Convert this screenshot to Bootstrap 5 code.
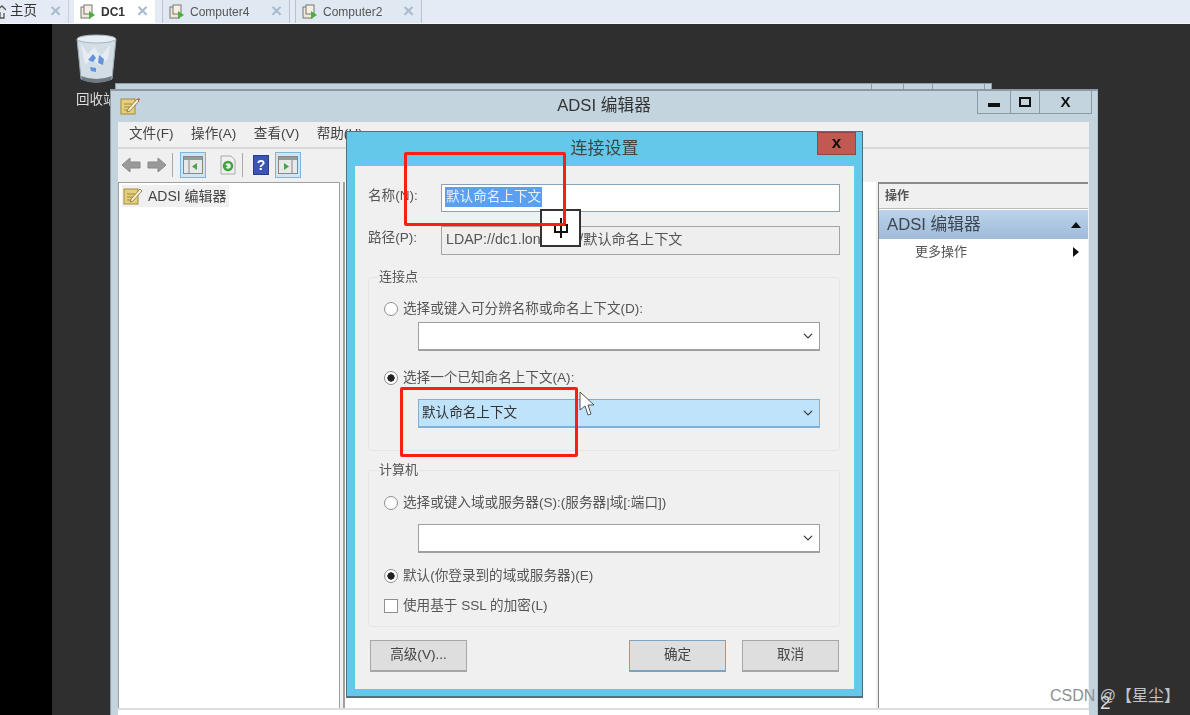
<!DOCTYPE html>
<html lang="zh"><head><meta charset="utf-8"><title>ADSI 编辑器</title>
<link href="https://cdn.jsdelivr.net/npm/bootstrap@5.3.0/dist/css/bootstrap.min.css" rel="stylesheet">
<style>
html,body{height:715px;overflow:hidden;margin:0;background:#000}
body,.form-control,.form-select,.btn{font-family:"Liberation Sans","Noto Sans CJK SC",sans-serif;font-size:13.6px;color:#444}
.stage{width:1190px;height:715px;position:relative;overflow:hidden;filter:blur(.55px)}
.tabbar{height:24px;background:#e4ebf4;border-bottom:1px solid #f4f6f9}
.vmtab{height:23px;display:flex;align-items:center;gap:5px;color:#555;font-size:12px;padding-left:6px;position:relative}
.vmtab.tab-home{width:69px;padding-left:0;gap:4px;font-size:13.5px;color:#333;border-right:1px solid #c6d0dc;margin-right:5px}
.vmtab.tab-on{width:81px;background:#fff;font-weight:700;color:#333;margin-right:7px}
.vmtab.tab-c4{width:128px;background:#e0e8f2;margin-right:5px;border-left:1px solid #b8c3cf;border-right:1px solid #b8c3cf}
.vmtab.tab-c2{width:127px;background:#e0e8f2;border-left:1px solid #b8c3cf;border-right:1px solid #b8c3cf}
.tabx{position:absolute;right:7px;top:2px;font-size:19px;color:#a9bbd0;font-weight:700;line-height:17px}
.desk{position:absolute;left:52px;top:24px;right:0;bottom:0;background:#2f2f2f}
.binicon{position:absolute;left:76px;top:34px}
.binlabel{position:absolute;left:76px;top:90px;color:#ddd;font-size:13.5px}
.ghost{position:absolute;left:115px;top:83px;width:877px;height:12px;background:#c3d4df;border:1px solid #8f9ea6;display:flex;justify-content:flex-end}
.ghost span{border-left:1px solid #8f9ea6}
.ghost .g1{width:32px}.ghost .g2{width:29px}.ghost .g3{width:52px}.ghost .g4{width:7px}
.appwin{position:absolute;left:110px;top:89px;width:988px;height:640px;background:#c3d4df;border-top:2px solid #8b9aa2;border-left:1px solid #8b9aa2;border-right:1px solid #aebfca}
.apptitle{height:31px;position:relative;text-align:center;font-size:16.7px;line-height:30px;color:#333}
.appicon{position:absolute;left:9px;top:6px}
.winctl{position:absolute;right:5px;top:-1px;height:24px;width:115px;border:1px solid #8b9aa2;border-top:0}
.winctl span{display:flex;align-items:center;justify-content:center;border-right:1px solid #8b9aa2;font-weight:700;color:#111}
.winctl span:nth-child(1){width:33px}.winctl span:nth-child(2){width:29px}.winctl span:nth-child(3){flex:1;border:0;font-size:15px}
.ctl-min{width:12px;height:4px;background:#111;margin-top:7px}
.ctl-max{width:12px;height:10px;border:2px solid #111}
.appbody{margin:0 8px 0 7px;background:#f0f0f0;height:590px}
.menuline{height:27px;border-bottom:2px solid #d9d9d9;padding-left:11px;gap:17.5px;align-items:center;color:#444}
.toolline{height:33px;padding:0 0 1px 1px;align-items:center;gap:1px}
.tbtn{width:26px;height:26px;display:flex;align-items:center;justify-content:center}
.tbtn.tb-arrow{width:24.5px}
.tbtn.tb-view{margin-left:4px}
.tbtn.tb-refresh{width:22px;margin-left:10px}
.tbtn.tb-help{margin-left:2px}
.tbtn.on{background:#cde6f7;border:1px solid #7db5db}
.tsep{width:1px;height:24px;background:#a9a9a9;margin:0 2px}
.panes{height:526px}
.pane-left{width:222px;background:#fff;border:1px solid #a0a0a0;border-bottom:0;padding:2px 3px}
.treeitem{display:inline-flex;align-items:center;gap:5px;background:#f0f0f0;height:22px;padding:0 2px 0 1px;color:#444;font-size:14px}
.pane-mid{width:533px;margin:0 2px 0 3px;background:#fff;border-left:2px solid #a0a0a0}
.pane-right{width:210px;background:#fff;border-left:1px solid #808080;border-top:2px solid #8a8a8a}
.act-h{height:25px;background:#f0f0f0;border-bottom:1px solid #bbb;padding:0 6px;font-size:12px;font-weight:700;color:#555;line-height:25px}
.act-b{height:29px;background:linear-gradient(#bcd3ea,#9fbbd9);display:flex;align-items:center;justify-content:space-between;padding:0 7px 0 8px;font-size:16.7px;color:#3c4650;margin-top:1px}
.act-i{height:25px;display:flex;align-items:center;justify-content:space-between;padding:0 9px 0 36px;font-size:13px;color:#555}
.tri-up{width:0;height:0;border-style:solid;border-color:transparent transparent #111;border-width:0 5.5px 6px}
.tri-right{border:5px solid transparent;border-right:0;border-left:6px solid #111;width:0;height:0}
.appfoot{height:8px;border-top:2px solid #ddd;background:#fff}
.dlg{position:absolute;left:346px;top:131px;width:517px;height:567px;background:#63c8ea;border:1px solid #55707c;border-right-color:#4d6a77;border-bottom-width:2px}
.dlg-title{height:34px;text-align:center;font-size:17px;line-height:33px;color:#444;position:relative}
.dlg-x{position:absolute;right:6px;top:0;width:39px;height:23px;background:#c0594f;border:1px solid #8c4a44;color:#111;font-weight:700;font-size:17px;line-height:19px}
.dlg-in{margin:0 8px;background:#f0f0f0;height:523px;padding:18px 14px 0 13px}
.f-row{display:flex;align-items:center;height:28px;margin-bottom:14px}
.f-row label{width:73px;color:#555;padding-bottom:3px}
.dlgfield{flex:1;height:28px;border-radius:0;padding:0 2px 3px 3px;background:#fff;border:1px solid #8aa3bb;color:#555;box-shadow:none;display:flex;align-items:center;line-height:18px}
.dlgfield.ro{background:#eee;border:1px solid #a5a5a5;padding:0 0 2px 4px;height:29px;font-size:14.2px}
.sel-text{background:#5b9ff0;color:#e7f0fb;padding:0 1px;line-height:20px}
.gp{border:1px solid #e3e6e8;border-radius:3px;position:relative}
.gp-a{height:174px;margin-top:23px;padding-top:21px}
.gp-b{height:157px;margin-top:19px;padding-top:22px}
.gp-lg{position:absolute;left:10px;top:-9px;background:#f0f0f0;color:#555;line-height:16px;font-size:13px}
.opt{display:flex;align-items:center;gap:5px;height:20px;padding-left:15px;margin:0;color:#555;min-height:0}
.opt .form-check-input{margin:0;width:14px;height:14px;float:none;border-color:#8f8f8f;background-color:#fff;flex:none}
.opt .form-check-input:checked{background-color:#fff;border-color:#8f8f8f;background-image:radial-gradient(circle,#222 0 3.4px,transparent 3.9px)}
.dlgsel{display:block;margin-left:49px;width:402px;height:29px;border-radius:0;padding:0 24px 0 3px;background-color:#fff;border:1px solid #a0a0a0;border-bottom-width:2px;color:#333;font-size:13.6px;box-shadow:none;background-position:right 5px center;background-size:12px 10px}
.dlgsel.hot{background-color:#bfe3fb;border-color:#7fb1d8}
.s1{margin-top:3px}.s2{margin-top:11px}.o2{margin-top:17px}.o3{margin-top:13px}.o4{margin-top:10px}.s3{margin-top:11px}
.btnline{display:flex;justify-content:space-between;margin-top:13px;padding:0 1px 0 2px}
.dbtn{width:97px;height:32px;border-radius:0;background:#dedede;border:1px solid #a7a7a7;border-bottom-width:2px;color:#444;padding:0;font-size:13.6px}
.dbtn.pri{border-color:#7ba3c6;margin-right:16px}
.redbox{position:absolute;border:3px solid #fb1f12;border-radius:2px;pointer-events:none}
.rb1{left:404px;top:152px;width:162px;height:74px}
.rb2{left:400px;top:387px;width:178px;height:70px}
.cursorbox{position:absolute;left:540px;top:209px;width:41px;height:38px;background:#fff;border:2px solid #333;display:flex;align-items:center;justify-content:center}
.ptr{position:absolute;left:578px;top:391px}
.wmark{position:absolute;left:1050px;top:686px;color:#c4c4c4;font-size:16px;white-space:nowrap;line-height:20px}
.wmark i{font-style:normal;color:#8f8f8f}
.num2{position:absolute;left:1100px;top:693px;color:#ddd;font-size:19px;line-height:20px}
</style></head><body>
<div class="stage">
 <nav class="tabbar d-flex">
  <div class="vmtab tab-home"><svg width="6" height="14" viewBox="0 0 6 14"><path d="M-5 7l7-6 4 4M0 7v6h4V8" fill="none" stroke="#555" stroke-width="1.300"/></svg>主页<span class="tabx">×</span></div>
  <div class="vmtab tab-on"><svg width="16" height="16" viewBox="0 0 16 16"><rect x="1" y="3" width="9" height="11" fill="#efe9d9" stroke="#777"/><rect x="4" y="1" width="8" height="9" fill="#f5f0e2" stroke="#777"/><path d="M9 7l6 4-6 4z" fill="#4cae3c"/></svg>DC1<span class="tabx">×</span></div>
  <div class="vmtab tab-c4"><svg width="16" height="16" viewBox="0 0 16 16"><rect x="1" y="3" width="9" height="11" fill="#efe9d9" stroke="#777"/><rect x="4" y="1" width="8" height="9" fill="#f5f0e2" stroke="#777"/><path d="M9 7l6 4-6 4z" fill="#4cae3c"/></svg>Computer4<span class="tabx">×</span></div>
  <div class="vmtab tab-c2"><svg width="16" height="16" viewBox="0 0 16 16"><rect x="1" y="3" width="9" height="11" fill="#efe9d9" stroke="#777"/><rect x="4" y="1" width="8" height="9" fill="#f5f0e2" stroke="#777"/><path d="M9 7l6 4-6 4z" fill="#4cae3c"/></svg>Computer2<span class="tabx">×</span></div>
 </nav>
 <div class="desk"></div>
 <svg class="binicon" width="41" height="50" viewBox="0 0 41 50"><path d="M1 5h39l-4 40q-15 6-31 0z" fill="#d3dde6" stroke="#9aa5ae"/><ellipse cx="20.500" cy="5" rx="19.500" ry="4" fill="#e6edf3" stroke="#aab4bc"/><path d="M5 10l7 10 6-7 7 9 9-11-2 14-9 6-7-6-7 6z" fill="#eef3f7" opacity=".7"/><path d="M12 26l5-6 3 4-3 4zM23 21l5 4-1 6-5-2zM14 33l6 1v4l-5-1z" fill="#4e86d8" opacity=".85"/><path d="M5 42q15 6 31 0l-1 4q-15 6-29 0z" fill="#6f7a82"/></svg>
 <div class="binlabel">回收站</div>
 <div class="ghost"><span class="g1"></span><span class="g2"></span><span class="g3"></span><span class="g4"></span></div>
 <section class="appwin">
  <div class="apptitle">ADSI 编辑器
   <svg class="appicon" width="20" height="18" viewBox="0 0 20 18"><rect x="1" y="2" width="14" height="15" fill="#e6cf7c" stroke="#a08a3f"/><path d="M4 7h8M4 10h7M4 13h5" stroke="#a08a3f"/><path d="M8 12L17 2l2 2-9 10-3 1z" fill="#f6efcf" stroke="#85703a" stroke-width=".8"/><path d="M17 2l2 2 1-2-1-1z" fill="#d05a4a"/></svg>
   <div class="winctl d-flex"><span><i class="ctl-min"></i></span><span><i class="ctl-max"></i></span><span>X</span></div>
  </div>
  <div class="appbody">
   <div class="menuline d-flex"><span>文件(F)</span><span>操作(A)</span><span>查看(V)</span><span>帮助(H)</span></div>
   <div class="toolline d-flex">
    <div class="tbtn tb-arrow"><svg width="20" height="16" viewBox="0 0 20 16"><path d="M1 8l8-7v4h10v6H9v4z" fill="#9a9a9a" stroke="#888"/></svg></div>
    <div class="tbtn tb-arrow"><svg width="20" height="16" viewBox="0 0 20 16"><path d="M19 8l-8-7v4H1v6h10v4z" fill="#9a9a9a" stroke="#888"/></svg></div>
    <div class="tsep"></div>
    <div class="tbtn on tb-view"><svg width="20" height="18" viewBox="0 0 20 18"><rect x=".5" y=".5" width="19" height="17" fill="#e8e8e8" stroke="#888"/><rect x="1" y="1" width="18" height="3" fill="#999"/><path d="M6 4v14" stroke="#888"/><path d="M14 7v7l-5-3.500z" fill="#47a447"/></svg></div>
    <div class="tbtn tb-refresh"><svg width="16" height="20" viewBox="0 0 16 20"><path d="M1 1h10l4 4v14H1z" fill="#f0f0f0" stroke="#aaa"/><circle cx="8" cy="11" r="4" fill="none" stroke="#3fa33f" stroke-width="2.500"/><path d="M3 9l2 4 3-2z" fill="#3fa33f"/></svg></div>
    <div class="tsep"></div>
    <div class="tbtn tb-help"><svg width="16" height="20" viewBox="0 0 16 20"><rect x=".5" y=".5" width="15" height="19" fill="#3a55b5" stroke="#2a3d86"/><text x="8" y="15" text-anchor="middle" fill="#fff" font-size="14" font-weight="700" font-family="Liberation Sans">?</text></svg></div>
    <div class="tbtn on"><svg width="20" height="18" viewBox="0 0 20 18"><rect x=".5" y=".5" width="19" height="17" fill="#e8e8e8" stroke="#888"/><rect x="1" y="1" width="18" height="3" fill="#999"/><path d="M14 4v14" stroke="#888"/><path d="M6 7v7l5-3.500z" fill="#47a447"/></svg></div>
   </div>
   <div class="panes d-flex">
    <div class="pane-left"><span class="treeitem"><svg width="20" height="18" viewBox="0 0 20 18"><rect x="1" y="2" width="14" height="15" fill="#e6cf7c" stroke="#a08a3f"/><path d="M4 7h8M4 10h7M4 13h5" stroke="#a08a3f"/><path d="M8 12L17 2l2 2-9 10-3 1z" fill="#f6efcf" stroke="#85703a" stroke-width=".8"/></svg>ADSI 编辑器</span></div>
    <div class="pane-mid"></div>
    <div class="pane-right">
     <div class="act-h">操作</div>
     <div class="act-b">ADSI 编辑器<i class="tri-up"></i></div>
     <div class="act-i">更多操作<i class="tri-right"></i></div>
    </div>
   </div>
   <div class="appfoot"></div>
  </div>
 </section>
 <section class="dlg">
  <div class="dlg-title">连接设置<div class="dlg-x">x</div></div>
  <div class="dlg-in">
   <div class="f-row"><label>名称(N):</label><div class="form-control dlgfield"><span class="sel-text">默认命名上下文</span></div></div>
   <div class="f-row"><label>路径(P):</label><div class="form-control dlgfield ro">LDAP://dc1.long.com/默认命名上下文</div></div>
   <div class="gp gp-a"><div class="gp-lg">连接点</div>
    <label class="form-check opt"><input class="form-check-input" type="radio" name="a">选择或键入可分辨名称或命名上下文(D):</label>
    <select class="form-select dlgsel s1" aria-label="命名上下文"><option></option></select>
    <label class="form-check opt o2"><input class="form-check-input" type="radio" name="a" checked>选择一个已知命名上下文(A):</label>
    <select class="form-select dlgsel hot s2" aria-label="已知命名上下文"><option>默认命名上下文</option></select>
   </div>
   <div class="gp gp-b"><div class="gp-lg">计算机</div>
    <label class="form-check opt"><input class="form-check-input" type="radio" name="b">选择或键入域或服务器(S):(服务器|域[:端口])</label>
    <select class="form-select dlgsel s3" aria-label="服务器"><option></option></select>
    <label class="form-check opt o3"><input class="form-check-input" type="radio" name="b" checked>默认(你登录到的域或服务器)(E)</label>
    <label class="form-check opt o4"><input class="form-check-input rounded-0" type="checkbox">使用基于 SSL 的加密(L)</label>
   </div>
   <div class="btnline"><button class="btn dbtn" type="button">高级(V)...</button><div class="d-flex"><button class="btn dbtn pri" type="button">确定</button><button class="btn dbtn" type="button">取消</button></div></div>
  </div>
 </section>
 <div class="cursorbox"><svg width="16" height="22" viewBox="0 0 16 22"><path d="M8 1v20M2 8h12v7H2z" fill="none" stroke="#111" stroke-width="2"/></svg></div>
 <svg class="ptr" width="18" height="26" viewBox="0 0 18 26"><path d="M2 1v18l5-4 3 9 3-1-3-9h6z" fill="#fff" stroke="#555"/></svg>
</div>
<div class="redbox rb1"></div>
<div class="redbox rb2"></div>
<div class="num2">2</div>
<div class="wmark"><i>CSDN</i> @【星尘】</div>
</body></html>
